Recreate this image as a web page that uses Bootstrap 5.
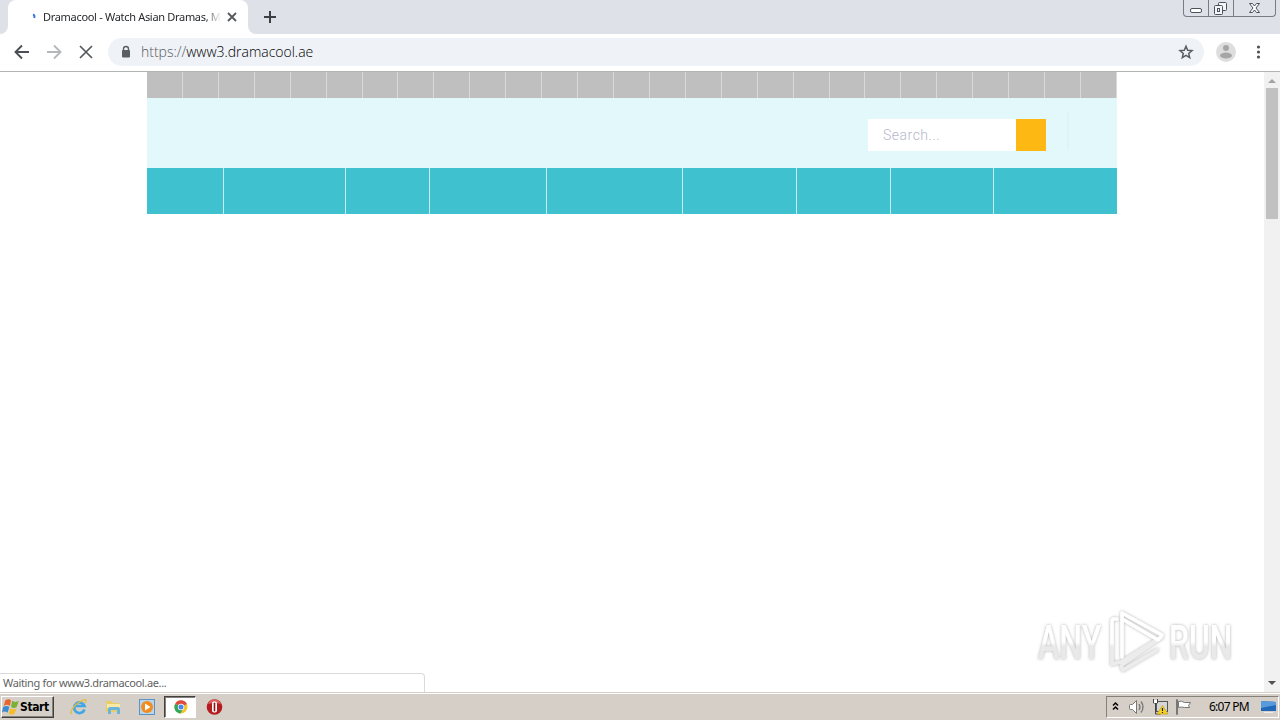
<!DOCTYPE html>
<html lang="en">
<head>
    <meta charset="UTF-8">
    <title>Dramacool - Watch Asian Dramas</title>
    <meta name="viewport" content="width=device-width, initial-scale=1">

    <!-- Bootstrap 5 CDN -->
    <link href="https://cdn.jsdelivr.net/npm/bootstrap@5.3.0/dist/css/bootstrap.min.css" rel="stylesheet">
    <style>
        body {
            font-family: "Noto Sans", "Open Sans", sans-serif;
            font-size: 11px;
            line-height: 1;
            color: #3c4043;
        }
        svg { display: block; flex: none; }

        /* Tab strip */
        .tab-strip { height: 34px; background: #dee1e8; }
        .strip-edge { width: 8px; background: #dee1e8; border-bottom-right-radius: 8px; }
        .strip-rest { background: #dee1e8; border-bottom-left-radius: 8px; }
        .strip-under { background: #fff; }
        .browser-tab { width: 240px; background: #fff; border-radius: 8px 8px 0 0; padding-left: 23px; }
        .tab-title {
            width: 180px;
            padding-left: 2px;
            font-size: 11px;
            letter-spacing: -.31px;
            line-height: 16px;
            color: #26282b;
            -webkit-mask-image: linear-gradient(90deg, #000 91%, transparent);
            mask-image: linear-gradient(90deg, #000 91%, transparent);
        }
        .win-buttons { width: 93px; height: 17px; margin-right: 4px; border: 1px solid #777c85; border-top: 0; border-radius: 0 0 4px 4px; }
        .win-buttons span + span { border-left: 1px solid #777c85; }

        /* Toolbar */
        .tool-bar { height: 38px; border-bottom: 1px solid #b2b4b2; padding-left: 14px; padding-bottom: 1px; }
        .address-bar { width: 1096px; height: 28px; background: #eff2f6; padding: 0 10px 0 12px; margin-left: 14px; }
        .address-text { font-size: 14px; letter-spacing: -.02px; color: #000; margin-left: 9px; font-family: "Open Sans", sans-serif; font-weight: 300; }
        .address-text span { color: #55595e; }

        /* Page */
        .view-port { height: 620px; }
        .site { width: 970px; }
        .letter-row { height: 26px; background: #bfbfbf; }
        .letter-row div { border-right: 1px solid #d9d9d9; }
        .site-head { height: 70px; background: #e2f8fa; padding-right: 48px; padding-top: 14px; }
        .search-field {
            width: 148px;
            height: 32px;
            margin-top: 7px;
            padding: 0 15px;
            background: #fff;
            font: 14px Roboto, sans-serif;
            font-weight: 300;
            color: #b6b6ca;
            letter-spacing: .5px;
        }
        .search-go { width: 30px; height: 32px; margin-top: 7px; background: #fdb813; }
        .head-rule { width: 2px; height: 38px; margin-left: 21px; background: #e0f3f7; }
        .menu-row { height: 46px; background: #40c1d0; }
        .menu-row div { border-right: 1px solid #c4ecf1; }
        .scroll-track { width: 16px; background: #f1f1f1; }
        .scroll-thumb { width: 12px; height: 131px; background: #c1c1c1; }
        .load-status {
            left: 0;
            bottom: 0;
            width: 425px;
            height: 19px;
            border: 1px solid #dadada;
            border-left: 0;
            border-bottom: 0;
            border-radius: 0 4px 0 0;
            background: #fff;
            padding-left: 3px;
            padding-bottom: 2px;
            color: #626262;
            letter-spacing: -.35px;
        }
        .watermark { left: 1030px; top: 530px; }

        /* Taskbar */
        .task-bar { height: 28px; background: #d5cfc7; border-top: 1px solid #d5cfc7; box-shadow: inset 0 1px #fff; padding: 2px 1px; }
        .start-btn {
            width: 53px;
            height: 22px;
            background: #d5cfc7;
            border: 1px solid;
            border-color: #fff #404040 #404040 #fff;
            box-shadow: inset -1px -1px #858078;
            font: bold 12px "DejaVu Sans Condensed", sans-serif;
            letter-spacing: -.4px;
            color: #000;
        }
        .task-active { width: 32px; height: 22px; border: 1px solid; border-color: #404040 #fff #fff #404040; background: #fff; box-shadow: inset 1px 1px #858078; }
        .tray { width: 173px; height: 22px; border: 1px solid; border-color: #858078 #fff #fff #858078; color: #000; }
        .tray-clock { width: 41px; padding-left: 1px; font-size: 12px; letter-spacing: -.75px; white-space: nowrap; }
    </style>
</head>
<body class="d-flex flex-column vh-100 overflow-hidden bg-white">

<!-- Tabs -->
<div class="tab-strip d-flex">
    <div class="strip-under d-flex"><div class="strip-edge"></div></div>
    <div class="browser-tab d-flex align-items-center">
        <svg width="6" height="8" viewBox="0 0 6 8"><path d="M2 1.500Q4 2 3.200 5" fill="none" stroke="#2f74df" stroke-width="2"/></svg>
        <div class="tab-title text-nowrap ms-1">Dramacool - Watch Asian Dramas, M</div>
        <svg class="ms-1" width="14" height="14" viewBox="0 0 14 14"><path d="M3 3l8 8M11 3l-8 8" stroke="#55585c" stroke-width="1.8"/></svg>
    </div>
    <div class="strip-under d-flex flex-grow-1">
        <div class="strip-rest d-flex flex-grow-1 justify-content-between">
            <svg class="mt-2" width="44" height="18" viewBox="0 0 44 18"><path d="M22 3v12M16 9h12" stroke="#3c4043" stroke-width="2"/></svg>
            <div class="win-buttons d-flex">
                <span><svg width="24" height="16" viewBox="0 0 24 16"><rect x="6.500" y="8.500" width="11" height="4" rx="1.500" fill="#fff" stroke="#4d515b"/></svg></span>
                <span><svg width="24" height="16" viewBox="0 0 24 16"><g fill="#f4f5f7" stroke="#4d515b"><rect x="9.500" y="2.500" width="8" height="8" rx="1"/><rect x="5.500" y="5.500" width="8" height="9" rx="1"/><rect x="8.500" y="8.500" width="2" height="3"/></g></svg></span>
                <span><svg width="41" height="16" viewBox="0 0 41 16"><path d="M15.500 3.500h3l2 2.500 2-2.500h3l-3.500 4.500 3.500 4.500h-3l-2-2.500-2 2.500h-3L19 8z" fill="#fff" stroke="#4d515b"/></svg></span>
            </div>
        </div>
    </div>
</div>

<!-- Navigation and address -->
<div class="tool-bar d-flex align-items-center">
    <svg width="16" height="16" viewBox="0 0 16 16"><path d="M15 8H2M8 1.500L1.500 8 8 14.500" fill="none" stroke="#4b4e52" stroke-width="1.900"/></svg>
    <svg class="ms-3" width="16" height="16" viewBox="0 0 16 16"><path d="M1 8h13M8 1.500L14.500 8 8 14.500" fill="none" stroke="#b5b7ba" stroke-width="1.900"/></svg>
    <svg class="ms-3" width="16" height="16" viewBox="0 0 16 16"><path d="M2 2l12 12M14 2L2 14" stroke="#55585c" stroke-width="1.700"/></svg>
    <div class="address-bar rounded-pill d-flex align-items-center">
        <svg width="12" height="14" viewBox="0 0 12 14"><path d="M3.500 6V4a2.500 2.500 0 0 1 5 0v2" fill="none" stroke="#5b5f64" stroke-width="1.400"/><rect x="2" y="5" width="8" height="7.500" rx="1" fill="#5b5f64"/></svg>
        <div class="address-text flex-grow-1"><span>https://</span>www3.dramacool.ae</div>
        <svg width="16" height="16" viewBox="0 0 16 16"><path d="M8 2.200l1.700 4 4.300.4-3.300 2.800 1 4.200L8 11.400l-3.700 2.200 1-4.200L2 6.600l4.300-.4z" fill="none" stroke="#5a5d62" stroke-width="1.500"/></svg>
    </div>
    <svg class="ms-2" width="28" height="20" viewBox="0 0 28 20"><circle cx="14" cy="10" r="10" fill="#dedede"/><circle cx="14" cy="6" r="3" fill="#a6a6a6"/><ellipse cx="14" cy="13.500" rx="6" ry="3" fill="#a6a6a6"/></svg>
    <svg class="ms-3" width="6" height="16" viewBox="0 0 6 16"><g fill="#4f5256"><circle cx="2.500" cy="3" r="1.600"/><circle cx="2.500" cy="8" r="1.600"/><circle cx="2.500" cy="13" r="1.600"/></g></svg>
</div>

<!-- Page -->
<div class="view-port d-flex position-relative">
    <div class="flex-grow-1">
        <div class="site mx-auto">
            <div class="letter-row d-flex" id="letterRow"></div>
            <div class="site-head d-flex justify-content-end">
                <div class="search-field d-flex align-items-center">Search...</div>
                <div class="search-go"></div>
                <div class="head-rule"></div>
            </div>
            <div class="menu-row d-flex" id="menuRow"></div>
        </div>
    </div>
    <div class="scroll-track d-flex flex-column align-items-center">
        <svg width="16" height="16" viewBox="0 0 16 16"><path d="M4 11l4-4 4 4z" fill="#a3a3a3"/></svg>
        <div class="scroll-thumb"></div>
        <svg class="mt-auto" width="16" height="17" viewBox="0 0 16 17"><path d="M4 6h8l-4 4z" fill="#505050"/></svg>
    </div>

    <div class="load-status position-absolute d-flex align-items-center">Waiting for www3.dramacool.ae...</div>

    <svg class="watermark position-absolute" width="210" height="80" viewBox="0 0 210 80">
        <defs>
            <linearGradient id="fade" x1="0" y1="0" x2="0" y2="1"><stop offset=".5" stop-color="#fff"/><stop offset=".58" stop-color="#e9e9e9"/></linearGradient>
            <filter id="glow" x="-10%" y="-20%" width="120%" height="140%"><feDropShadow dx="0" dy="0" stdDeviation="1.600" flood-color="#777" flood-opacity=".6"/></filter>
        </defs>
        <g filter="url(#glow)">
            <g fill="url(#fade)" font-family="Roboto, sans-serif" font-size="49" font-weight="500">
                <text transform="translate(8 57) scale(.66 1)" textLength="96" lengthAdjust="spacingAndGlyphs">ANY</text>
                <text transform="translate(139 57) scale(.66 1)" textLength="96" lengthAdjust="spacingAndGlyphs">RUN</text>
            </g>
            <g fill="none" stroke-width="3.600" stroke-linejoin="round" stroke-linecap="round">
                <path d="M130 36L91 60 82 62" stroke="#ececec"/>
                <path d="M132 35l-39 27q-3 2 0 6l34-20" stroke="#ececec"/>
                <path d="M87 17h-3q-2 0-2 3v24" stroke="#fff"/>
                <path d="M82 44v18" stroke="#ececec"/>
                <path d="M92 55V11l40 22-4 5-34-20" stroke="#fff"/>
            </g>
        </g>
    </svg>
</div>

<!-- Taskbar -->
<div class="task-bar d-flex align-items-center">
    <div class="start-btn d-flex align-items-center">
        <svg width="18" height="18" viewBox="1 1 16 16"><path d="M4 3q3-2 5 0L8 8Q5 6 2.500 8z" fill="#e8652b"/><path d="M10 3.500q3 2 6 0L14 9q-3 2-5-.5z" fill="#7caf38"/><path d="M2 9q3-2 5.500 0L6 14q-3-2-5 0z" fill="#3c8bd0"/><path d="M8.500 10q3 2 5.500 0l-2 5q-3 2-5-.5z" fill="#f4bd27"/></svg>
        <span>Start</span>
    </div>
    <svg class="ms-3" width="18" height="18" viewBox="0 0 18 18"><path d="M14.500 11.500A5.300 5.300 0 1 1 14.500 8H5" fill="none" stroke="#42a7e4" stroke-width="2.700"/><path d="M2 15C-1 17 2 9 8 5s10-5 7 0" fill="none" stroke="#e6bc39" stroke-width="1.400"/></svg>
    <svg class="ms-3" width="18" height="18" viewBox="0 0 18 18"><path d="M2 3h6l1 2h7v9H2z" fill="#e9cd69"/><path d="M3 6h13v4H3z" fill="#f8e9a7"/><path d="M4 16v-5q0-2 2-2h8q2 0 2 2v5h-3v-4H7v4z" fill="#69b5dd"/></svg>
    <svg class="ms-3" width="18" height="18" viewBox="0 0 18 18"><rect x="1.500" y="1.500" width="15" height="15" fill="#b9d5ec" stroke="#5c93c6"/><circle cx="9" cy="9" r="6" fill="#f28c20"/><path d="M7 5.500v7L12.500 9z" fill="#fff"/></svg>
    <div class="task-active d-flex align-items-center justify-content-center ms-2">
        <svg width="15" height="14" viewBox="-1 0 15 14"><circle cx="7" cy="7" r="6.500" fill="#f5c52e"/><path d="M7 7L1.200 3.800A6.600 6.600 0 0 1 12.900 4z" fill="#dd4b3e"/><path d="M7 7L1.200 3.800A6.600 6.600 0 0 0 6.500 13.600L9 9z" fill="#35a55a"/><circle cx="7" cy="7" r="3.200" fill="#fff"/><circle cx="7" cy="7" r="2.500" fill="#4687ed"/></svg>
    </div>
    <svg class="ms-2" width="20" height="18" viewBox="0 0 20 18"><circle cx="10.500" cy="9" r="7.800" fill="#b51c20"/><path d="M4 6a7 7 0 0 1 13 0q-6-2-13 0" fill="#db6260"/><rect x="8" y="3.500" width="5" height="11" rx="2" fill="#fff"/><rect x="9.700" y="4.500" width="1.600" height="9" rx=".8" fill="#8e1418"/></svg>

    <div class="tray d-flex align-items-center ms-auto">
        <svg width="17" height="16" viewBox="0 0 17 16"><path d="M6 6.500L8.500 4 11 6.500M6 10.500L8.500 8l2.500 2.500" fill="none" stroke="#000" stroke-width="1.500"/></svg>
        <svg class="ms-1" width="18" height="18" viewBox="0 0 18 18"><path d="M2.500 6.500h2l4-4v13l-4-4h-2q-1 0-1-1v-3q0-1 1-1z" fill="#fff" stroke="#777"/><path d="M11 6q2 3 0 6M13 3.500q4 5.500 0 11" fill="none" stroke="#777" stroke-width="1.300"/></svg>
        <svg class="ms-1" width="20" height="18" viewBox="0 0 20 18"><rect x="6.500" y="3.500" width="11" height="10" fill="#d6d6d6" stroke="#555"/><path d="M3.500 1v4h4V1M5.500 5v11h5" fill="none" stroke="#444"/><path d="M4 2h3v3H4z" fill="#fff"/><path d="M12.500 7.500L18 16H7z" fill="#f6d327" stroke="#c59c12" stroke-width=".7"/><path d="M12.500 10v3M12.500 14v1" stroke="#222" stroke-width="1.200"/></svg>
        <svg class="ms-1" width="18" height="18" viewBox="0 0 18 18"><path d="M2.500 1.500h1v15h-1z" fill="#fff" stroke="#777"/><path d="M4.500 3.500q3-1 6 1h6l-2 3 1 2h-5q-3-1-6 0z" fill="#fff" stroke="#777"/></svg>
        <div class="tray-clock ms-3">6:07 PM</div>
        <svg class="ms-auto" width="18" height="16" viewBox="0 0 18 16"><path d="M1 2l15 1v9H1z" fill="#2168b8"/><path d="M1 2l15 1v3L1 9z" fill="#579bdd"/><path d="M4 13.500h9" stroke="#eee"/></svg>
    </div>
</div>

<script src="https://cdn.jsdelivr.net/npm/bootstrap@5.3.0/dist/js/bootstrap.bundle.min.js"></script>
<script>
// Letter filter: equal cells across the whole row
const letterRow = document.getElementById("letterRow");
for (let i = 0; i < 27; i++) {
    let cell = document.createElement("div");
    cell.className = "flex-fill";
    letterRow.appendChild(cell);
}

// Main menu: one width for each entry, the rest stays empty
const menuWidths = [77, 122, 84, 117, 136, 114, 94, 103];
const menuRow = document.getElementById("menuRow");
menuWidths.forEach(w => {
    let cell = document.createElement("div");
    cell.style.width = w + "px";
    menuRow.appendChild(cell);
});
</script>
</body>
</html>
